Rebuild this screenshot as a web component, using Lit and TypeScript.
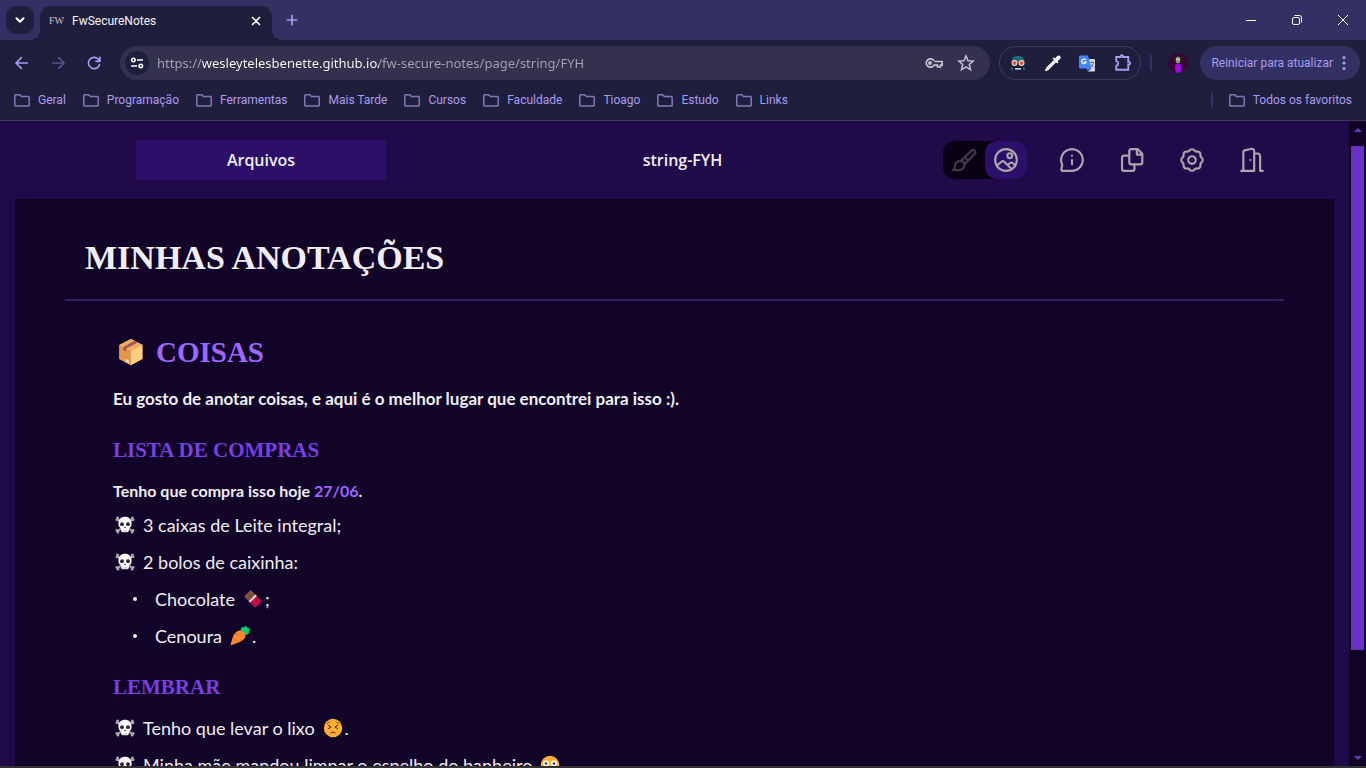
import { LitElement, html, css, svg } from "lit";
import { customElement, state } from "lit/decorators.js";

const stroke = (size: number, body: unknown, width = 2) => html`<svg
  class="icon" width=${size} height=${size} viewBox="0 0 24 24" fill="none"
  stroke="currentColor" stroke-width=${width} stroke-linecap="round" stroke-linejoin="round" aria-hidden="true">${body}</svg>`;

const folder = html`<svg class="icon" width="16" height="16" viewBox="0 0 16 16" fill="none"
  stroke="currentColor" stroke-width="1.5" stroke-linejoin="round" aria-hidden="true">
  <path d="M.8 13.2V3.6Q.8 2.8 1.6 2.8h4.2l1.6 1.8h7q.8 0 .8.8v7.8q0 .8-.8.8H1.6q-.8 0-.8-.8z"/></svg>`;

const skull = html`<svg class="icon" width="20" height="20" viewBox="0 0 20 20" aria-hidden="true">
  <path d="M3 4.5 17 16M17 4.5 3 16" stroke="#a9a9ad" stroke-width="2"/>
  <g fill="#a9a9ad"><circle cx="2.6" cy="3" r="1.5"/><circle cx="1.9" cy="4.8" r="1.4"/><circle cx="17.4" cy="3" r="1.5"/><circle cx="18.1" cy="4.8" r="1.4"/>
  <circle cx="1.9" cy="15.4" r="1.4"/><circle cx="2.9" cy="17.1" r="1.5"/><circle cx="18.1" cy="15.4" r="1.4"/><circle cx="17.1" cy="17.1" r="1.5"/></g>
  <path d="M10 1.8c-4 0-6.6 2.6-6.6 6.4 0 2.5.7 4.4 2.7 5.1v2.3q0 1.600 1.500 1.600h4.800q1.500 0 1.500-1.600v-2.300c2-.7 2.700-2.600 2.700-5.100 0-3.800-2.600-6.400-6.600-6.400z" fill="#fafafa"/>
  <circle cx="7" cy="9.2" r="1.9" fill="#252329"/><circle cx="13" cy="9.2" r="1.9" fill="#252329"/>
  <path d="m10 11.4-1.1 1.7h2.2z" fill="#252329"/><path d="M8.4 15v2M10 15v2M11.6 15v2" stroke="#aaa" stroke-width=".6"/></svg>`;

const box = html`<svg class="icon" width="28" height="28" viewBox="0 0 28 28" aria-hidden="true">
  <path d="m14 1 11.6 6v14L14 27.2 2.4 21V7z" fill="#ffce7c"/>
  <path d="m2.4 7 11.6 6v14.2L2.4 21z" fill="#e19747"/>
  <path d="m14 1 11.6 6L14 13 2.4 7z" fill="#f3ad61"/>
  <path d="m17.5 2.8 3.3 1.7-11.4 6.1v3L6.1 12V8.9z" fill="#9b6057"/>
  <path d="m8.5 20.8 3.4 1.8v3l-3.4-1.8z" fill="#eadfd8"/></svg>`;

const chocolate = html`<svg class="icon" width="20" height="20" viewBox="0 0 20 20" aria-hidden="true">
  <path d="m7.6 1 6.2 6-6.7 6.6-6-6.2z" fill="#8b5147"/>
  <path d="m4.3 4.2 6.3 6.2M10.7 3.9 4 10.5" stroke="#6d3d3a" stroke-width=".8"/>
  <path d="m12.8 6 6.2 6.2-6.7 6.6-6.2-6.2z" fill="#c50b45"/>
  <path d="m12.3 5.6 1.5 1.5-6.7 6.5-1.5-1.4z" fill="#ecdce0"/></svg>`;

const carrot = html`<svg class="icon" width="20" height="20" viewBox="0 0 20 20" aria-hidden="true">
  <path d="M11 5.600c-.8-2.800.4-5 2.600-4.400C15-.4 17.200-.2 17.500 1.800c2.400-.2 3 2.400 1.500 3.700.7 2.600-2.700 4.300-5 2.500z" fill="#00cf70"/>
  <path d="M13.4 5.700c2.900 2.500 2.700 5.100.4 7.500-2.700 2.800-7.400 4-12 5.900-.8.3-1.200-.2-1-1 1.200-4.500 1.900-8.600 4.700-11.400 2.600-2.600 5.400-2.800 7.900-1z" fill="#ff8730"/>
  <path d="m6 8 2 1.500M10.6 13.2l1.400 1.2M4.3 13l1.700 1.300" stroke="#e36618"/></svg>`;

const persevere = html`<svg class="icon" width="20" height="20" viewBox="0 0 20 20" aria-hidden="true">
  <circle cx="10" cy="10" r="9.2" fill="#ffb02e"/>
  <g fill="none" stroke="#49263b" stroke-width="1" stroke-linecap="round"><path d="m5.300 7.400 2.800 1.700-2.800 1.500M14.700 7.400l-2.800 1.700 2.800 1.500M7.800 14.800q2.200-2 4.400 0"/>
  <path d="M4 5.500q1.800 0 2.800-1.600M16 5.500q-1.800 0-2.800-1.600" stroke="#985032"/></g></svg>`;

const flushed = html`<svg class="icon" width="20" height="20" viewBox="0 0 20 20" aria-hidden="true">
  <circle cx="10" cy="10" r="9.2" fill="#ffb02e"/><circle cx="4.5" cy="12" r="2.4" fill="#ff8359"/><circle cx="15.5" cy="12" r="2.4" fill="#ff8359"/>
  <circle cx="6" cy="8.500" r="3" fill="#fff"/><circle cx="14" cy="8.500" r="3" fill="#fff"/>
  <circle cx="6" cy="8.500" r="1.300" fill="#402a32"/><circle cx="14" cy="8.500" r="1.300" fill="#402a32"/>
  <path d="M8 15h4" stroke="#402a32" stroke-linecap="round"/></svg>`;

@customElement("browser-chrome")
class BrowserChrome extends LitElement {
  static styles = css`
    :host { display: block; flex: none; background: #1f1f3d; color: #a99cf0; border-bottom: 1px solid #3c3a63; font-family: Roboto, "Open Sans", sans-serif; font-size: 12px; }
    * { box-sizing: border-box; }
    button, input { font: inherit; color: inherit; border: 0; padding: 0; margin: 0; background: none; }
    button, a { display: flex; align-items: center; justify-content: center; }
    a { color: inherit; text-decoration: none; white-space: nowrap; }
    .icon { display: block; flex: none; }
    .tabs { display: flex; height: 40px; padding: 6px 0 0 6px; background: #333163; }
    .search { width: 28px; height: 28px; border-radius: 10px; background: #1f1f3d; color: #fff; }
    .tab { position: relative; display: flex; align-items: center; width: 232px; margin-left: 6px; padding: 0 9px 5px; border-radius: 10px 10px 0 0; background: #1f1f3d; color: #f4f3fa; }
    .tab::before, .tab::after { content: ""; position: absolute; bottom: 0; width: 10px; height: 10px; }
    .tab::before { right: 100%; background: radial-gradient(circle at 0 0, transparent 10px, #1f1f3d 10px); }
    .tab::after { left: 100%; background: radial-gradient(circle at 100% 0, transparent 10px, #1f1f3d 10px); }
    .fav { width: 23px; font: 10px "Liberation Serif", serif; color: #c5c4cf; }
    .title { flex: 1; }
    .close { width: 14px; height: 14px; }
    .new { width: 28px; height: 28px; margin-left: 6px; }
    .window { display: flex; margin-left: auto; color: #fff; }
    .window button { width: 46px; height: 28px; }
    .bar { display: flex; align-items: center; height: 46px; padding: 0 6px 0 4px; }
    .nav { width: 36px; height: 32px; }
    .off { color: #56508c; }
    .address { display: flex; align-items: center; flex: 1; height: 34px; margin: 0 9px 0 8px; padding: 0 8px 0 5px; border-radius: 17px; background: #33314e; color: #c5c3cd; }
    .site { width: 24px; height: 24px; border-radius: 12px; background: #1f1f3d; color: #fff; }
    .url { flex: 1; min-width: 0; height: 24px; margin: 0 8px; font-family: "Noto Sans", sans-serif; font-size: 13px; color: transparent; background: linear-gradient(90deg, #a5a4b3 45px, #fff 45px, #fff 222px, #a5a4b3 222px); -webkit-background-clip: text; background-clip: text; outline: 0; }
    .address .act { width: 32px; height: 32px; }
    .exts { display: flex; align-items: center; height: 34px; width: 142px; justify-content: space-around; border: 1px solid #3a395f; border-radius: 17px; }
    .exts button { width: 32px; height: 32px; }
    .sep { width: 2px; height: 16px; background: #333163; }
    .sep.first { margin: 0 16px 0 9px; }
    .avatar { width: 20px; height: 20px; margin-right: 12px; }
    .update { height: 34px; padding: 0 8px 0 11px; gap: 3px; border-radius: 17px; background: #333163; font-size: 12px; white-space: nowrap; }
    .marks { display: flex; align-items: center; height: 34px; padding: 0 14px 6px; gap: 17px; }
    .marks a { gap: 8px; }
    .marks .icon { color: #8278b8; }
    .marks .right { display: flex; align-items: center; gap: 16px; margin-left: auto; }
  `;

  render() {
    const marks = ["Geral", "Programação", "Ferramentas", "Mais Tarde", "Cursos", "Faculdade", "Tioago", "Estudo", "Links"];
    return html`
      <div class="tabs">
        <button class="search" aria-label="Pesquisar guias">${stroke(14, svg`<path d="m6 9 6 6 6-6"/>`, 3.6)}</button>
        <div class="tab"><span class="fav">FW</span><span class="title">FwSecureNotes</span>
          <button class="close" aria-label="Fechar">${stroke(14, svg`<path d="m6 6 12 12M18 6 6 18"/>`, 3)}</button></div>
        <button class="new" aria-label="Nova guia">${stroke(16, svg`<path d="M12 5v14M5 12h14"/>`, 2.6)}</button>
        <div class="window">
          <button aria-label="Minimizar"><svg class="icon" width="12" height="12" viewBox="0 0 12 12" stroke="currentColor"><path d="M1 6.5h10"/></svg></button>
          <button aria-label="Restaurar"><svg class="icon" width="12" height="12" viewBox="0 0 12 12" fill="none" stroke="currentColor"><rect x="1.5" y="3.5" width="7" height="7" rx="1.5"/><path d="M3.5 1.5h5q2 0 2 2v5"/></svg></button>
          <button aria-label="Fechar janela"><svg class="icon" width="12" height="12" viewBox="0 0 12 12" stroke="currentColor"><path d="m1 1 10 10M11 1 1 11"/></svg></button>
        </div>
      </div>
      <div class="bar">
        <button class="nav" aria-label="Voltar">${stroke(16, svg`<path d="M20 12H4M11 4l-8 8 8 8"/>`, 2.5)}</button>
        <button class="nav off" aria-label="Avançar">${stroke(16, svg`<path d="M4 12h16M13 4l8 8-8 8"/>`, 2.5)}</button>
        <button class="nav" aria-label="Recarregar">${stroke(16, svg`<path stroke-linecap="butt" d="M20.500 13.500A8.500 8.500 0 1 1 18 5.800L21 9M21 2.500V9.500h-7"/>`, 2.5)}</button>
        <div class="address">
          <button class="site" aria-label="Informações do site"><svg class="icon" width="14" height="14" viewBox="0 0 14 14" fill="none" stroke="currentColor" stroke-width="1.6"><circle cx="3.400" cy="4" r="1.700"/><path d="M7 4h6M1 10h6"/><circle cx="10.800" cy="10" r="1.700"/></svg></button>
          <input class="url" aria-label="Endereço" spellcheck="false" value="https://wesleytelesbenette.github.io/fw-secure-notes/page/string/FYH">
          <button class="act" aria-label="Senhas"><svg class="icon" width="18" height="12" viewBox="0 0 18 12" fill="none" stroke="currentColor" stroke-width="1.700"><path d="M9 3.800A4.200 4.200 0 1 0 9 8.200h3.500V10h3V8.200h1.700V4.500H9.400"/><circle cx="5" cy="6" r="1.100"/></svg></button>
          <button class="act" aria-label="Favoritar">${stroke(18, svg`<path stroke-linejoin="miter" d="m12 2.500 2.700 6.400 6.900.6-5.200 4.500 1.600 6.800-6-3.600-6 3.600 1.600-6.800-5.200-4.500 6.900-.6z"/>`)}</button>
        </div>
        <div class="exts">
          <button aria-label="Extensão de leitura"><svg class="icon" width="16" height="16" viewBox="0 0 16 16"><path d="M1.500 8Q1 .8 8 .8T14.500 8z" fill="#236877"/><path d="M2 9h12v6H2z" fill="#101a29"/><circle cx="4.500" cy="8" r="2.900" fill="#f2e4dd"/><circle cx="11.500" cy="8" r="2.900" fill="#f2e4dd"/><circle cx="4.500" cy="8" r="2" fill="#ed5340"/><circle cx="11.500" cy="8" r="2" fill="#ed5340"/><path d="M1 15.200q0-3 2-3.200v3.200zM15 15.200q0-3-2-3.200v3.200z" fill="#246c7a"/><path d="M5 13.800h6" stroke="#bfdbe0" stroke-width="1.600"/></svg></button>
          <button aria-label="Conta-gotas"><svg class="icon" width="16" height="16" viewBox="0 0 16 16"><path d="m10 5-8 8-1 2.300L3.300 14l8-8" fill="#3153c9" stroke="#fff" stroke-width="1.600"/><path d="m7.500 3.500 1.500-1 1.200 1 2-2.600q1.800-1 2.800.1 1.300 1.300.1 2.900l-2.500 2 .8 1.300-1.200 1.300z" fill="#fff"/></svg></button>
          <button aria-label="Tradutor"><svg class="icon" width="17" height="17" viewBox="0 0 17 17"><path d="M6 4h9q1 0 1 1v10.500q0 1-1 1H9z" fill="#d6d9df"/><path d="M1 .5h8l3.500 13H1q-1 0-1-1V1.500q0-1 1-1z" fill="#4285f4"/><path d="m8.500 13.500h4L9 16.500z" fill="#2459bb"/><path d="M6.800 5.200A2.200 2.200 0 1 0 7 7.200H5" fill="none" stroke="#fff" stroke-width="1.200"/><path d="M11 7.500h4M13 6.300v1.200M14.500 7.800q-.7 3-3 4M12 9.500l3 3" fill="none" stroke="#667" stroke-width=".9"/></svg></button>
          <button aria-label="Extensões">${stroke(18, svg`<path stroke-linejoin="miter" d="M3 4h6V2.800q0-1.300 1.500-1.300T12 2.800V4h7v6.500h1.200q1.300 0 1.300 1.700t-1.300 1.700H19V21H3v-5.500q2.600-.6 2.600-3T3 9.500z"/>`, 2.5)}</button>
        </div>
        <span class="sep first"></span>
        <button class="avatar" aria-label="Perfil"><svg class="icon" width="20" height="20" viewBox="0 0 20 20"><circle cx="10" cy="10" r="10" fill="#3b0536"/><path d="M6 8Q4 3 8 2.500q3-2 5 .7 2.400 2.300 1 5.300l-1.400 2H7.500z" fill="#251b19"/><ellipse cx="10" cy="7" rx="2.300" ry="3.200" fill="#a18f8a"/><path d="M8 6.300h4" stroke="#e4dedc"/><path d="M7.500 11q2.500-1 5 0l1 5.500-1 3H7.800L7 16z" fill="#9f09ec"/></svg></button>
        <button class="update">Reiniciar para atualizar <svg class="icon" width="16" height="16" viewBox="0 0 16 16" fill="currentColor"><circle cx="8" cy="2.500" r="1.600"/><circle cx="8" cy="8" r="1.600"/><circle cx="8" cy="13.500" r="1.600"/></svg></button>
      </div>
      <nav class="marks">
        ${marks.map((m) => html`<a href="#">${folder}${m}</a>`)}
        <div class="right"><span class="sep"></span><a href="#">${folder}Todos os favoritos</a></div>
      </nav>`;
  }
}

@customElement("app-root")
class AppRoot extends LitElement {
  @state() mode = "view";

  static styles = css`
    :host { display: flex; flex-direction: column; height: 100vh; overflow: hidden; border-bottom: 2px solid #333; box-sizing: border-box; background: #200a4a; color: #f0eef4; }
    * { box-sizing: border-box; }
    button { display: flex; align-items: center; justify-content: center; border: 0; padding: 0; margin: 0; background: none; color: inherit; font: inherit; }
    .icon { display: block; flex: none; }
    .body { flex: 1; display: flex; min-height: 0; }
    .page { flex: 1; min-width: 0; overflow: hidden; padding: 0 15px; }
    .top { display: flex; align-items: center; height: 78px; padding: 0 46px 0 121px; font: 600 16px "Open Sans", "Noto Sans", sans-serif; }
    .files { width: 250px; height: 40px; background: #2b0f69; }
    .name { flex: 1; margin-left: 36px; text-align: center; font: inherit; }
    .toggle { display: flex; height: 38px; margin-right: 21px; border-radius: 12px; background: #080114; color: #3c3844; }
    .toggle button { width: 42px; border-radius: 12px; }
    .toggle .on { background: #2b0f69; color: #aaa6aa; }
    .tool { width: 48px; height: 40px; margin-right: 12px; color: #aaa6aa; }
    .note { min-height: 100%; padding: 33px 50px; background: #120428; font: 18px "Lato", "Noto Sans", sans-serif; }
    h1, h2, h3 { margin: 0; font-family: "Liberation Serif", serif; font-weight: 700; text-transform: uppercase; }
    h1 { padding: 0 20px 15px; border-bottom: 2px solid #321e62; font-size: 34px; line-height: 52px; }
    .content { padding: 31px 48px; }
    h2 { display: flex; align-items: center; gap: 11px; padding-left: 4px; color: #9c66ff; font-size: 29px; line-height: 40px; }
    h3 { margin-top: 23px; color: #7840e2; font-size: 21px; line-height: 32px; }
    p { margin: 15px 0 0; font-size: 17px; font-weight: 700; line-height: 24px; }
    h3 + p { margin-top: 13px; font-size: 16px; }
    .date { color: #9c66ff; }
    ul { list-style: none; margin: 0; padding: 0; }
    li { line-height: 24px; margin-top: 13px; }
    p + ul > li:first-child { margin-top: 10px; }
    .row { display: flex; align-items: center; gap: 8px; padding-left: 2px; }
    .sub .row { gap: 18px; padding-left: 20px; }
    .dot { width: 4px; height: 4px; border-radius: 2px; background: #f0eef4; }
    .text { display: flex; align-items: center; gap: 2px; }
    .text .icon { margin-left: 6px; }
    .track { display: flex; flex-direction: column; align-items: center; width: 17px; padding: 7px 0 6px 0; background: #110326; color: #6c33c8; }
    .rail { flex: 1; width: 13px; margin: 14px 0 10px; }
    .thumb { height: 84%; background: #6932c6; }
  `;

  private item(text: string, emoji?: unknown, end = "") {
    return html`<div class="row">${skull}<span class="text">${text}${emoji ?? ""}${end}</span></div>`;
  }

  render() {
    const arrow = (d: string) => html`<svg class="icon" width="8" height="4" viewBox="0 0 8 4" fill="currentColor"><path d=${d}/></svg>`;
    return html`
      <browser-chrome></browser-chrome>
      <div class="body">
        <main class="page">
          <header class="top">
            <button class="files">Arquivos</button>
            <button class="name">string-FYH</button>
            <div class="toggle">
              <button class=${this.mode === "edit" ? "on" : ""} aria-label="Editar" @click=${() => (this.mode = "edit")}>${stroke(28, svg`<path d="m9.300 12.700 8.900-8.500q1.600-1.400 3-.2 1.200 1.400-.2 3l-8.700 8.700M12.500 9.800l2.800 2.800M9.300 12.700q3 .5 3 3.200 0 4.500-4.500 4.800H2.500q2-1 1.800-4 .3-4 5-4z"/>`)}</button>
              <button class=${this.mode === "view" ? "on" : ""} aria-label="Visualizar" @click=${() => (this.mode = "view")}>${stroke(26, svg`<circle cx="12" cy="12" r="10"/><circle cx="15.500" cy="8" r="2.200"/><path d="m3.500 17.200 4.300-3.600q1.200-1 2.500 0l6.200 6M13.800 16.500l2-1.700q1.200-1 2.500 0l1.500 1.500"/>`)}</button>
            </div>
            <button class="tool" aria-label="Informações">${stroke(26, svg`<path d="M3 22q-1 0-.8-1.200l.8-4.300A10 10 0 1 1 12.300 22zM12 12v4M12 8v.1"/>`)}</button>
            <button class="tool" aria-label="Copiar">${stroke(26, svg`<path d="M11.500 2h5.800L21.500 6.200V14q0 2-2 2h-8q-2 0-2-2V4q0-2 2-2zM16.500 2.500V7h4.500M9.500 8H4.800Q2.800 8 2.800 10v10q0 2 2 2h7.500q2 0 2-2v-4"/>`)}</button>
            <button class="tool" aria-label="Configurações">${stroke(26, svg`<circle cx="12" cy="12" r="3.500"/><path d="M9.700 3.300C10.600 1.700 13.400 1.700 14.300 3.300Q15 4.600 16.600 4.200C18.400 3.800 20.200 5.600 19.800 7.400Q19.400 9 20.700 9.700C22.300 10.600 22.300 13.400 20.700 14.300Q19.400 15 19.800 16.600C20.200 18.400 18.400 20.200 16.600 19.800Q15 19.400 14.300 20.700C13.400 22.300 10.600 22.300 9.700 20.700Q9 19.400 7.400 19.800C5.600 20.200 3.800 18.400 4.200 16.600Q4.600 15 3.300 14.300C1.700 13.400 1.700 10.600 3.300 9.700Q4.600 9 4.200 7.400C3.800 5.600 5.600 3.800 7.400 4.200Q9 4.600 9.700 3.300z"/>`)}</button>
            <button class="tool" aria-label="Sair">${stroke(26, svg`<path d="M2 22h12M4 22V5q0-1.500 1.300-1.900l5.200-1.200Q14 1.200 14 4v18M14 6h3q2.500 0 2.500 2.500V22H22M10.500 12v.1"/>`)}</button>
          </header>
          <article class="note">
            <h1>Minhas Anotações</h1>
            <div class="content">
              <h2>${box}<span>Coisas</span></h2>
              <p>Eu gosto de anotar coisas, e aqui é o melhor lugar que encontrei para isso :).</p>
              <h3>Lista de compras</h3>
              <p>Tenho que compra isso hoje <span class="date">27/06</span>.</p>
              <ul>
                <li>${this.item("3 caixas de Leite integral;")}</li>
                <li>${this.item("2 bolos de caixinha:")}
                  <ul class="sub">
                    <li class="row"><span class="dot"></span><span class="text">Chocolate ${chocolate};</span></li>
                    <li class="row"><span class="dot"></span><span class="text">Cenoura ${carrot}.</span></li>
                  </ul>
                </li>
              </ul>
              <h3>Lembrar</h3>
              <ul>
                <li>${this.item("Tenho que levar o lixo", persevere, ".")}</li>
                <li>${this.item("Minha mãe mandou limpar o espelho do banheiro", flushed)}</li>
              </ul>
            </div>
          </article>
        </main>
        <div class="track" aria-hidden="true">${arrow("M0 4 4 0l4 4z")}<div class="rail"><div class="thumb"></div></div>${arrow("M0 0h8L4 4z")}</div>
      </div>`;
  }
}
